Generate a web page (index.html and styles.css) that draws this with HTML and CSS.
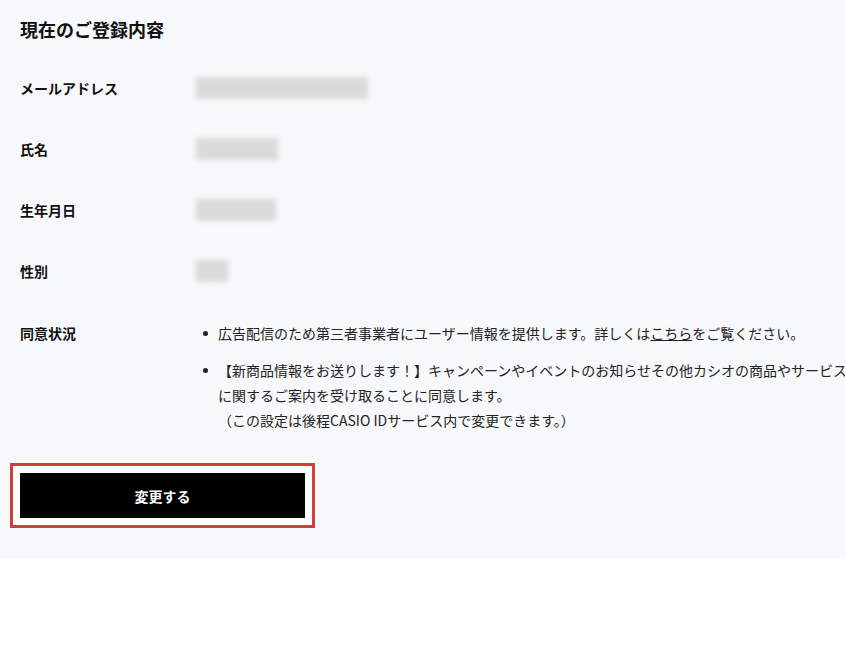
FILE: index.html
```html
<!DOCTYPE html>
<html lang="ja">
<head>
<meta charset="utf-8">
<title>現在のご登録内容</title>
<link rel="stylesheet" href="styles.css">
</head>
<body>
<section class="panel">
  <h2 class="title">現在のご登録内容</h2>
  <div class="row">
    <div class="label">メールアドレス</div>
    <div class="value"><span class="blur blur-email"></span></div>
  </div>
  <div class="row">
    <div class="label">氏名</div>
    <div class="value"><span class="blur blur-name"></span></div>
  </div>
  <div class="row">
    <div class="label">生年月日</div>
    <div class="value"><span class="blur blur-birth"></span></div>
  </div>
  <div class="row">
    <div class="label">性別</div>
    <div class="value"><span class="blur blur-gender"></span></div>
  </div>
  <div class="row row-consent">
    <div class="label">同意状況</div>
    <ul class="consent">
      <li>広告配信のため第三者事業者にユーザー情報を提供します。詳しくは<a href="#" class="link">こちら</a>をご覧ください。</li>
      <li>【新商品情報をお送りします！】キャンペーンやイベントのお知らせその他カシオの商品やサービスに関するご案内を受け取ることに同意します。<br>（この設定は後程CASIO IDサービス内で変更できます。）</li>
    </ul>
  </div>
  <div class="btn-frame">
    <button class="btn" type="button">変更する</button>
  </div>
</section>
</body>
</html>
```

FILE: styles.css
```css
html, body {
  margin: 0;
  padding: 0;
  background: #ffffff;
  overflow-x: hidden;
}
body {
  font-family: "Noto Sans CJK JP", "Noto Sans", sans-serif;
  color: #1a1a1a;
}
.panel {
  background: #f7f8fa;
  padding: 17px 20px 30px 20px;
  overflow: hidden;
}
.title {
  margin: 0;
  font-size: 18px;
  line-height: 24px;
  font-weight: 700;
  color: #111;
}
.row {
  display: flex;
  align-items: center;
  height: 22px;
  margin-top: 39px;
}
.row:nth-of-type(1) {
  margin-top: 36px;
}
.label {
  flex: none;
  width: 176px;
  font-size: 14px;
  font-weight: 700;
  line-height: 22px;
  color: #111;
}
.value {
  flex: none;
}
.blur {
  display: block;
  height: 22px;
  background: #dadada;
  filter: blur(2.5px);
}
.blur-email { width: 172px; }
.blur-name { width: 82px; }
.blur-birth { width: 80px; }
.blur-gender { width: 32px; }

.row-consent {
  height: auto;
  align-items: flex-start;
  margin-top: 39px;
}
.row-consent .label {
  line-height: 25px;
}
.consent {
  flex: none;
  width: 662px;
  margin: 0;
  padding: 0;
  list-style: none;
  font-size: 14px;
  line-height: 25px;
  color: #222;
}
.consent li {
  position: relative;
  padding-left: 22px;
}
.consent li + li {
  margin-top: 12px;
}
.consent li::before {
  content: "";
  position: absolute;
  left: 7px;
  top: 10px;
  width: 5px;
  height: 5px;
  border-radius: 50%;
  background: #222;
}
.link {
  color: #222;
  text-decoration: underline;
}
.btn-frame {
  display: inline-block;
  margin: 30px 0 0 -10px;
  border: 3px solid #cf3f3c;
  background: #ffffff;
  padding: 7px;
}
.btn {
  display: block;
  width: 285px;
  height: 45px;
  border: 0;
  background: #000;
  color: #fff;
  font-family: "Noto Sans CJK JP", "Noto Sans", sans-serif;
  font-size: 14px;
  font-weight: 700;
  cursor: pointer;
}
```
